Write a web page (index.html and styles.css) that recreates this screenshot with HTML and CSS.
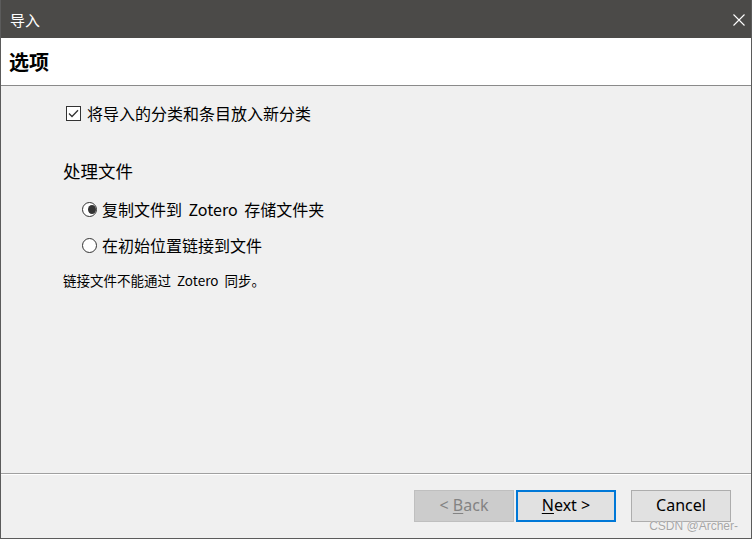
FILE: index.html
```html
<!DOCTYPE html>
<html lang="zh-CN">
<head>
<meta charset="utf-8">
<title>导入</title>
<link rel="stylesheet" href="styles.css">
</head>
<body>
<div class="window">
  <div class="titlebar">
    <span class="title">导入</span>
    <svg class="close" width="12" height="12" viewBox="0 0 12 12"><path d="M0.5 0.5 L11.5 11.5 M11.5 0.5 L0.5 11.5" stroke="#ffffff" stroke-width="1.1" fill="none"/></svg>
  </div>
  <div class="header"><h1>选项</h1></div>
  <div class="content">
    <label class="check-row">
      <span class="checkbox"><svg width="11" height="9" viewBox="0 0 11 9"><path d="M1 4.5 L4 7.5 L10 1.2" stroke="#333" stroke-width="1.3" fill="none"/></svg></span>
      <span>将导入的分类和条目放入新分类</span>
    </label>
    <div class="section-title">处理文件</div>
    <div class="radios">
      <label class="radio-row"><span class="radio checked"><span class="dot"></span></span><span>复制文件到 Zotero 存储文件夹</span></label>
      <label class="radio-row"><span class="radio"></span><span>在初始位置链接到文件</span></label>
    </div>
    <div class="note">链接文件不能通过 Zotero 同步。</div>
  </div>
  <div class="footer">
    <button class="btn disabled">&lt; <u>B</u>ack</button>
    <button class="btn primary"><u>N</u>ext &gt;</button>
    <button class="btn cancel">Cancel</button>
    <span class="watermark">CSDN @Archer-</span>
  </div>
</div>
</body>
</html>
```
FILE: styles.css
```css
* { box-sizing: border-box; }
html, body { margin: 0; padding: 0; }
body {
  width: 752px;
  height: 539px;
  overflow: hidden;
  font-family: "Noto Sans", "Noto Sans CJK SC", sans-serif;
  color: #000;
}
.window {
  width: 752px;
  height: 539px;
  display: flex;
  flex-direction: column;
  background: #f0f0f0;
  border-left: 1px solid #5b5b5b;
  border-right: 1px solid #5b5b5b;
  border-bottom: 1px solid #5b5b5b;
  position: relative;
}
.titlebar {
  height: 38px;
  background: #4b4a48;
  display: flex;
  align-items: center;
  justify-content: space-between;
  padding: 0 6px 0 9px;
  flex-shrink: 0;
}
.title {
  color: #fff;
  font-size: 15px;
  font-family: "Noto Sans CJK SC", sans-serif;
  line-height: 1;
  margin-top: 1px;
}
.close { margin-right: 0; margin-top: 1px; }
.header {
  height: 48px;
  background: #fff;
  border-bottom: 1px solid #8a8a8a;
  display: flex;
  align-items: center;
  padding-left: 8px;
  flex-shrink: 0;
}
.header h1 {
  margin: 0;
  font-size: 20px;
  font-weight: 700;
  font-family: "Noto Sans CJK SC", sans-serif;
  line-height: 1;
  margin-top: 1px;
}
.content {
  flex: 1;
  padding: 16px 0 0 62px;
  font-family: "Noto Sans CJK SC", sans-serif;
}
.check-row {
  display: flex;
  align-items: center;
  font-size: 16px;
  line-height: 22px;
  margin-left: 3px;
}
.checkbox {
  width: 15px;
  height: 15px;
  border: 1px solid #333;
  background: #fff;
  display: inline-flex;
  align-items: center;
  justify-content: center;
  margin-right: 6px;
}
.section-title {
  font-size: 17.5px;
  line-height: 24px;
  margin-top: 35px;
}
.radios {
  margin-top: 15px;
  padding-left: 19px;
  display: flex;
  flex-direction: column;
  gap: 14px;
}
.radio-row {
  display: flex;
  align-items: center;
  font-size: 16px;
  line-height: 22px;
  word-spacing: 3px;
}
.radio-row span:last-child { margin-left: 5px; }
.radio {
  width: 15px;
  height: 15px;
  border: 1px solid #333;
  border-radius: 50%;
  background: #fff;
  display: inline-flex;
  align-items: center;
  justify-content: center;
}
.radio .dot {
  width: 9px;
  height: 9px;
  border-radius: 50%;
  background: #333;
}
.note {
  font-size: 13.5px;
  line-height: 18px;
  margin-top: 15px;
  word-spacing: 3px;
}
.footer {
  height: 65px;
  border-top: 1px solid #a0a0a0;
  box-shadow: inset 0 1px 0 #fff;
  display: flex;
  align-items: flex-start;
  padding: 16px 0 0 413px;
  position: relative;
  flex-shrink: 0;
}
.btn {
  width: 100px;
  height: 32px;
  font-family: "Noto Sans", sans-serif;
  font-size: 16px;
  background: #e1e1e1;
  border: 1px solid #adadad;
  color: #000;
  padding: 0 0 2px;
  margin: 0;
  line-height: 1;
}
.btn u { text-decoration: underline; text-underline-offset: 2px; }
.btn.disabled {
  background: #cccccc;
  border-color: #bfbfbf;
  color: #838383;
}
.btn.primary {
  margin-left: 2px;
  border: 2px solid #0078d7;
}
.btn.cancel { margin-left: 15px; }
.watermark {
  position: absolute;
  right: 13px;
  bottom: 5px;
  font-family: "Liberation Sans", sans-serif;
  font-size: 12px;
  color: #a6a6a6;
  text-shadow: 0 0 1px #fff;
}
```
